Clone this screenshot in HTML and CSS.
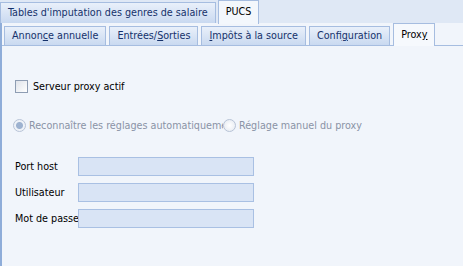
FILE: index.html
```html
<!DOCTYPE html>
<html>
<head>
  <link rel="stylesheet" href="styles.css">
</head>
<body>
  <!-- outer tabs -->
  <div class="tabbar outer">
    <div class="tab">Tables d'imputation des genres de salaire</div>
    <div class="tab active">PUCS</div>
  </div>

  <div class="panel">
    <!-- inner tabs -->
    <div class="tabbar inner">
      <div class="tab">Annon<u>c</u>e annuelle</div>
      <div class="tab">Entrées/<u>S</u>orties</div>
      <div class="tab"><u>I</u>mpôts à la source</div>
      <div class="tab">Confi<u>g</u>uration</div>
      <div class="tab active">Prox<u>y</u></div>
    </div>

    <div class="content">
      <label class="check">
        <span class="box"></span>
        Serveur proxy actif
      </label>

      <div class="radios">
        <span class="radio-item first">
          <span class="radio on"></span>
          <span class="clip">Reconnaître les réglages automatiquement</span>
        </span>
        <span class="radio-item">
          <span class="radio"></span>
          Réglage manuel du proxy
        </span>
      </div>

      <div class="fields">
        <div class="field">
          <span class="lbl">Port host</span>
          <span class="input"></span>
        </div>
        <div class="field">
          <span class="lbl">Utilisateur</span>
          <span class="input"></span>
        </div>
        <div class="field">
          <span class="lbl">Mot de passe</span>
          <span class="input"></span>
        </div>
      </div>
    </div>
  </div>
</body>
</html>
```

FILE: styles.css
```css
body {
  margin: 0;
  width: 463px;
  height: 266px;
  overflow: hidden;
  background-color: #f1f5fb;
  font-family: "DejaVu Sans Condensed", "DejaVu Sans", sans-serif;
  font-stretch: condensed;
  font-size: 10.7px;
  color: #000;
}

u {
  text-decoration: underline;
}

.tabbar {
  display: flex;
  align-items: flex-end;
}

.tabbar.outer {
  height: 23px;
  background-color: #dfe8f5;
  gap: 2px;
}

.tab {
  height: 18px;
  line-height: 18px;
  padding: 0 7px;
  border: 1px solid #a6bde0;
  border-bottom: none;
  background: linear-gradient(#e9f0fa, #c9d9f0);
  color: #15316b;
  white-space: nowrap;
}

.outer .tab {
  height: 20px;
  line-height: 20px;
}

.tab.active {
  background: #f6f9fd;
  color: #000;
  height: 22px;
  line-height: 21px;
  position: relative;
  top: 1px;
}

.outer .tab.active {
  height: 23px;
  line-height: 21px;
  background: #f3f7fc;
}

.panel {
  border-left: 2px solid #8fadd9;
  height: 243px;
}

.tabbar.inner {
  height: 22px;
  padding-left: 2px;
  gap: 3px;
  background-color: #f1f5fb;
  border-bottom: 1px solid #a6bde0;
}

.content {
  padding: 33px 0 0 13px;
}

.check {
  display: flex;
  align-items: center;
  gap: 5px;
  height: 14px;
}

.box {
  width: 11px;
  height: 11px;
  border: 1px solid #8e9db3;
  background: linear-gradient(135deg, #dfe3ea, #ffffff);
}

.radios {
  display: flex;
  margin-top: 25px;
  margin-left: -2px;
  color: #8a93a6;
  height: 14px;
  align-items: center;
}

.radio-item {
  display: flex;
  align-items: center;
  gap: 3px;
  white-space: nowrap;
}

.radio-item.first {
  width: 210px;
  overflow: hidden;
}

.clip {
  overflow: hidden;
}

.radio {
  flex: none;
  width: 11px;
  height: 11px;
  border-radius: 50%;
  border: 1px solid #b7c3d6;
  background: radial-gradient(#ffffff, #e3e8f0);
}

.radio.on {
  background: radial-gradient(circle, #9db2d0 0, #9db2d0 3px, #eef2f8 4px);
}

.fields {
  margin-top: 25px;
  display: flex;
  flex-direction: column;
  gap: 7px;
}

.field {
  display: flex;
  align-items: center;
  height: 19px;
}

.lbl {
  width: 63px;
  white-space: nowrap;
}

.input {
  width: 174px;
  height: 17px;
  border: 1px solid #a9c0e3;
  background-color: #d9e4f5;
  position: relative;
}
```
